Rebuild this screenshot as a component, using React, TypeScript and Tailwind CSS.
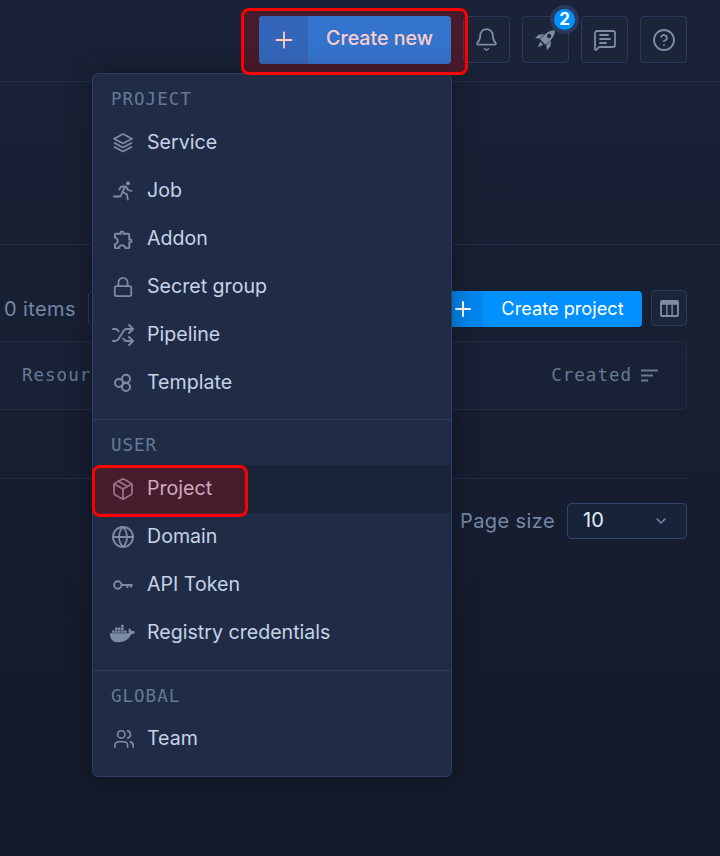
import { Bell, CircleHelp, Globe, Lock, MessageSquareText, Package, Plus, Shuffle, Users, ChevronDown } from "lucide-react";
import { FaDocker } from "react-icons/fa";
import { MdOutlineExtension } from "react-icons/md";
import type { ReactNode } from "react";

const sans = "font-['Inter','Noto_Sans',sans-serif]";
const mono = "font-['DejaVu_Sans_Mono','Liberation_Mono',monospace]";

function LayersIcon() {
  return (
    <svg width="20" height="20" viewBox="0 0 20 20" fill="none" stroke="currentColor" strokeWidth="1.7" strokeLinejoin="round">
      <path d="M10 1 19 5.800 10 10.600 1 5.800Z" />
      <path d="M1 9.800 10 14.600 19 9.800" />
      <path d="M1 13.800 10 18.600 19 13.800" />
    </svg>
  );
}

function RunIcon() {
  return (
    <svg width="20" height="20" viewBox="0 0 20 20" fill="none" stroke="currentColor" strokeWidth="1.8" strokeLinejoin="round" strokeLinecap="round">
      <circle cx="15" cy="2.200" r="2" fill="currentColor" stroke="none" />
      <path d="M6 8.500 8.500 5.500H13L15 9 18.500 10" />
      <path d="M12 6 9.500 11 14 13.500 14.800 18.500" />
      <path d="M9.500 11 7.500 15.500H1" />
    </svg>
  );
}

function TemplateIcon() {
  return (
    <svg width="20" height="20" viewBox="0 0 20 20" fill="none" stroke="currentColor" strokeWidth="1.9">
      <circle cx="6" cy="10" r="4" />
      <circle cx="13" cy="5.800" r="4" />
      <circle cx="13" cy="14" r="4" />
    </svg>
  );
}

function KeyIcon() {
  return (
    <svg width="20" height="20" viewBox="0 0 20 20" fill="none" stroke="currentColor" strokeWidth="1.9">
      <circle cx="4.800" cy="10" r="3.700" />
      <path d="M8.500 10H19.500M14.500 10v3M18 10v2.500" />
    </svg>
  );
}

function RocketIcon() {
  return (
    <svg width="21" height="21" viewBox="0 0 20 20" fill="currentColor">
      <g transform="rotate(45 10 10)">
        <path
          fillRule="evenodd"
          d="M10 -2.500C13.500 0.500 14.500 5 13.800 13.500H6.200C5.500 5 6.500 0.500 10 -2.500ZM10 3.200a2 2 0 1 0 0 4 2 2 0 0 0 0-4Z"
        />
        <path d="M5.500 7 2 11.500V16L5.500 13.500ZM14.500 7 18 11.500V16L14.500 13.500Z" />
        <path d="M8 15h4l-2 5.500Z" />
      </g>
    </svg>
  );
}

function MenuLabel({ children, className }: { children: ReactNode; className: string }) {
  return (
    <div className={`flex h-[28px] items-center pl-[18px] text-[17.5px] tracking-[1px] text-[#667a96] ${mono} ${className}`}>
      {children}
    </div>
  );
}

function MenuItem({ icon, label, active }: { icon: ReactNode; label: string; active?: boolean }) {
  return (
    <div className={`flex h-[48px] items-center pl-[20px] ${active ? "bg-[#1a2438]" : ""}`}>
      <span className="flex w-[34px] items-center text-[#7e8ca3]">{icon}</span>
      <span className="text-[19.6px] text-[#c5d3e8]">{label}</span>
    </div>
  );
}

function IconButton({ children }: { children: ReactNode }) {
  return (
    <div className="relative flex h-[47px] w-[47px] items-center justify-center rounded-[4px] border border-[#2a3a5c] bg-[#1b2439] text-[#7e8ca3]">
      {children}
    </div>
  );
}

export default function App() {
  return (
    <div className={`relative h-[856px] w-[720px] overflow-hidden bg-gradient-to-b from-[#1a2238] to-[#131a2a] ${sans}`}>
      {/* Header */}
      <div className="flex h-[82px] items-start justify-end gap-[12px] border-b border-[#212d45] pr-[33px] pt-[16px]">
        <div className="flex h-[48px] w-[192px] overflow-hidden rounded-[4px] bg-[#0090ff] text-white">
          <span className="flex w-[49px] items-center justify-center bg-[#0080e6]">
            <Plus size={26} strokeWidth={1.7} />
          </span>
          <span className="flex flex-1 items-center justify-center pb-[2px] text-[19.6px] font-medium">Create new</span>
        </div>
        <IconButton>
          <Bell size={25} strokeWidth={1.7} />
        </IconButton>
        <IconButton>
          <RocketIcon />
          <span className="absolute left-[27px] top-[-12px] flex h-[29px] w-[29px] items-center justify-center rounded-full border-[4px] border-[#2a3a5c] bg-[#0090ff] text-[17px] font-bold text-white">
            2
          </span>
        </IconButton>
        <IconButton>
          <MessageSquareText size={24} strokeWidth={1.8} />
        </IconButton>
        <IconButton>
          <CircleHelp size={24} strokeWidth={1.8} />
        </IconButton>
      </div>

      {/* Empty band */}
      <div className="h-[163px] border-b border-[#212d45]" />

      {/* Toolbar */}
      <div className="flex h-[96px] items-start pl-[4px] pr-[33px] pt-[46px]">
        <span className="mt-[4px] text-[20px] leading-[28px] tracking-[0.4px] text-[#7488a6]">0 items</span>
        <span className="ml-[12px] h-[35px] w-[20px] rounded-l-[4px] border border-[#2a3a5c]" />
        <div className="ml-auto flex h-[36px] w-[200px] overflow-hidden rounded-[4px] bg-[#0090ff] text-white">
          <span className="flex w-[41px] items-center justify-center bg-[#0085ec]">
            <Plus size={24} strokeWidth={2} />
          </span>
          <span className="flex flex-1 items-center justify-center text-[18.2px] font-normal">Create project</span>
        </div>
        <div className="ml-[9px] mt-[-1px] flex h-[36px] w-[36px] items-center justify-center rounded-[4px] border border-[#2a3a5c] bg-[#1b2439] text-[#7e8ca3]">
          <svg width="19" height="17" viewBox="0 0 20 18" fill="currentColor">
            <path d="M2 0h16a2 2 0 0 1 2 2v14a2 2 0 0 1-2 2H2a2 2 0 0 1-2-2V2a2 2 0 0 1 2-2Zm0 5v11h4.500V5H2Zm6 0v11h4V5H8Zm5.500 0v11H18V5h-4.500Z" />
          </svg>
        </div>
      </div>

      {/* Table head */}
      <div className="ml-[-8px] mr-[33px] flex h-[69px] items-center justify-between rounded-[4px] border border-[#212d45] bg-[#182135] pl-[29px] pr-[28px] text-[#667a96]">
        <span className={`text-[17.5px] tracking-[1px] ${mono}`}>Resource</span>
        <span className="flex items-center gap-[9px]">
          <span className={`text-[17.5px] tracking-[1px] ${mono}`}>Created</span>
          <svg width="17" height="13" viewBox="0 0 17 13" stroke="currentColor" strokeWidth="2">
            <path d="M0 1.500h17M0 6.500h12M0 11.500h7" />
          </svg>
        </span>
      </div>

      {/* Empty table body */}
      <div className="mr-[33px] h-[69px] border-b border-[#212d45]" />

      {/* Pagination */}
      <div className="flex items-center justify-end gap-[12px] pr-[33px] pt-[24px]">
        <span className="text-[20px] tracking-[0.4px] text-[#7488a6]">Page size</span>
        <div className="flex h-[36px] w-[120px] items-center justify-between rounded-[4px] border border-[#2f4468] bg-[#18233a] pl-[15px] pr-[17px]">
          <span className="pb-[2px] text-[20px] text-[#e3ecf8]">10</span>
          <ChevronDown size={16} strokeWidth={2} className="text-[#7e8ca3]" />
        </div>
      </div>

      {/* Dropdown */}
      <div className="absolute left-[92px] top-[73px] h-[704px] w-[360px] rounded-[6px] border border-[#2f3f60] bg-[#202c45] pt-[11px] shadow-[0_0_24px_rgba(0,0,0,0.35)]">
        <MenuLabel className="mb-[6px]">PROJECT</MenuLabel>
        <MenuItem icon={<LayersIcon />} label="Service" />
        <MenuItem icon={<RunIcon />} label="Job" />
        <MenuItem icon={<MdOutlineExtension size={23} className="ml-[-1px]" />} label="Addon" />
        <MenuItem icon={<Lock size={22} strokeWidth={1.9} className="ml-[-1px]" />} label="Secret group" />
        <MenuItem icon={<Shuffle size={24} strokeWidth={1.9} className="ml-[-2px]" />} label="Pipeline" />
        <MenuItem icon={<TemplateIcon />} label="Template" />
        <div className="mt-[12px] border-t border-[#2f3f60] pt-[11px]">
          <MenuLabel className="mb-[6px]">USER</MenuLabel>
          <MenuItem active icon={<Package size={24} strokeWidth={1.8} className="ml-[-2px]" />} label="Project" />
          <MenuItem icon={<Globe size={24} strokeWidth={1.8} className="ml-[-2px]" />} label="Domain" />
          <MenuItem icon={<KeyIcon />} label="API Token" />
          <MenuItem icon={<FaDocker size={25} className="ml-[-3px]" />} label="Registry credentials" />
        </div>
        <div className="mt-[13px] border-t border-[#2f3f60] pt-[11px]">
          <MenuLabel className="mb-[5px]">GLOBAL</MenuLabel>
          <MenuItem icon={<Users size={22} strokeWidth={1.8} />} label="Team" />
        </div>
      </div>

      {/* Annotation boxes */}
      <div className="absolute left-[241px] top-[8px] h-[67px] w-[227px] rounded-[8px] border-[3px] border-[#ff0000] bg-[rgba(255,0,0,0.2)]" />
      <div className="absolute left-[92px] top-[465px] h-[52px] w-[156px] rounded-[8px] border-[3px] border-[#ff0000] bg-[rgba(255,0,0,0.2)]" />
    </div>
  );
}
